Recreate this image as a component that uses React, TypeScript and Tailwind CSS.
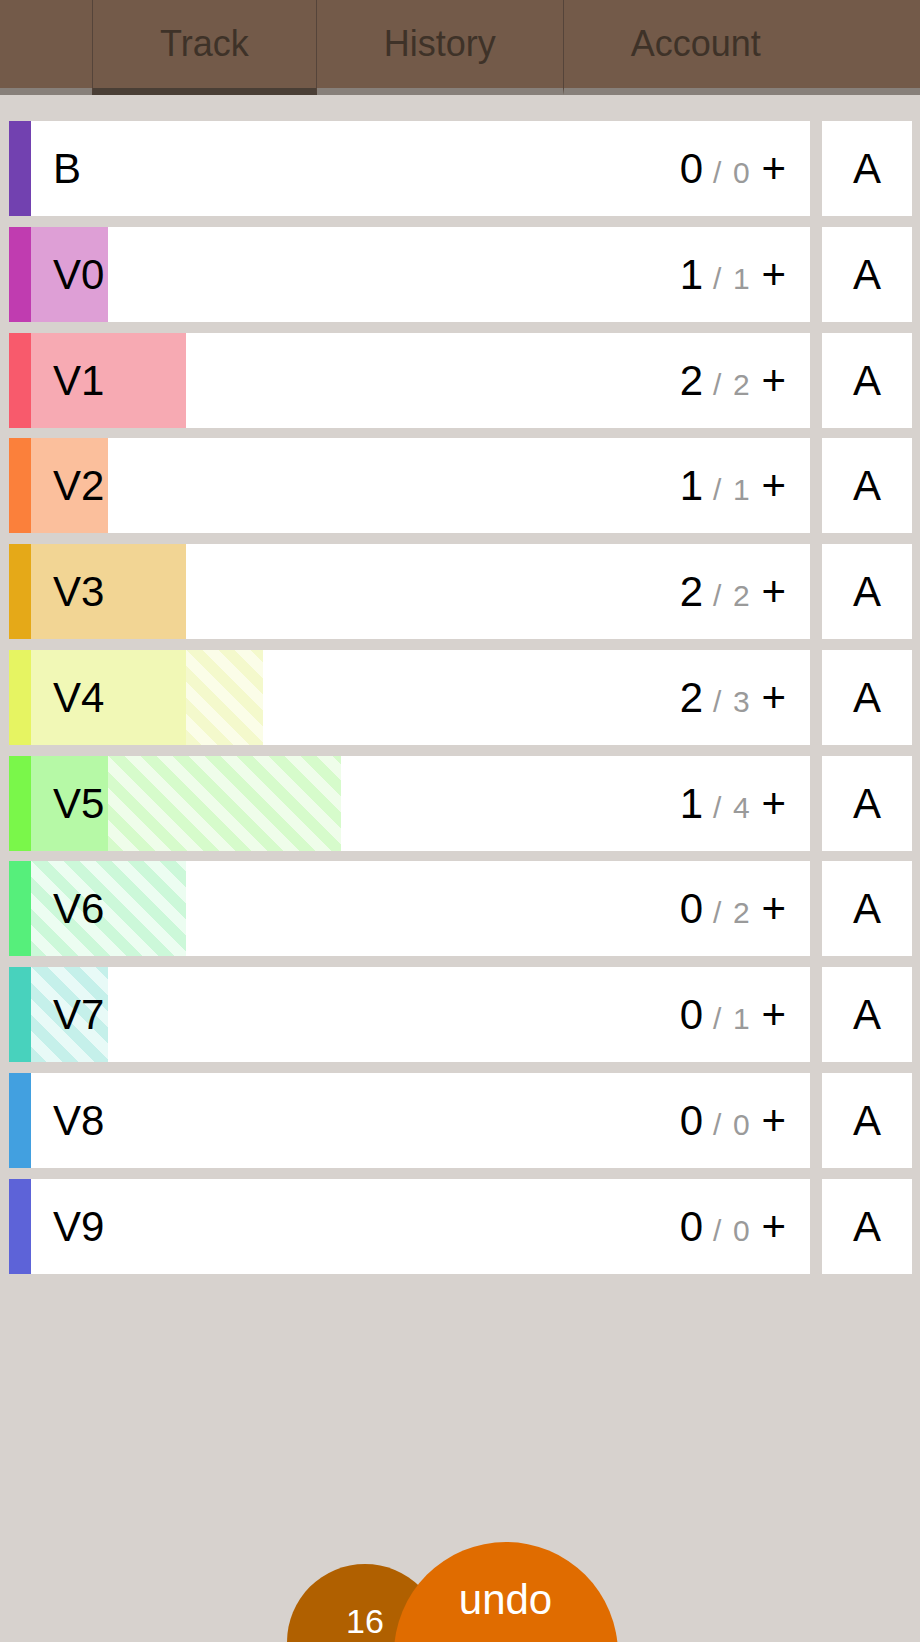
const UNIT = 77.4;

type Grade = {
  name: string;
  done: number;
  total: number;
  bar: string;
  fill: string;
  stripe: string;
};

const grades: Grade[] = [
  { name: "B", done: 0, total: 0, bar: "bg-[#7241b0]", fill: "", stripe: "" },
  { name: "V0", done: 1, total: 1, bar: "bg-[#c03cb0]", fill: "bg-[#de9fd6]", stripe: "" },
  { name: "V1", done: 2, total: 2, bar: "bg-[#f85a6c]", fill: "bg-[#f7aab3]", stripe: "" },
  { name: "V2", done: 1, total: 1, bar: "bg-[#fb803b]", fill: "bg-[#fbbf9c]", stripe: "" },
  { name: "V3", done: 2, total: 2, bar: "bg-[#e5a918]", fill: "bg-[#f2d594]", stripe: "" },
  {
    name: "V4",
    done: 2,
    total: 3,
    bar: "bg-[#e6f462]",
    fill: "bg-[#f1f8b6]",
    stripe: "bg-[repeating-linear-gradient(45deg,#f4f9cc_0_11.3px,#fbfde8_11.3px_22.6px)]",
  },
  {
    name: "V5",
    done: 1,
    total: 4,
    bar: "bg-[#7af74a]",
    fill: "bg-[#b6f9a6]",
    stripe: "bg-[repeating-linear-gradient(45deg,#d6fbcb_0_11.3px,#effdea_11.3px_22.6px)]",
  },
  {
    name: "V6",
    done: 0,
    total: 2,
    bar: "bg-[#56ef7b]",
    fill: "",
    stripe: "bg-[repeating-linear-gradient(45deg,#ccf8d9_0_11.3px,#ecfdf1_11.3px_22.6px)]",
  },
  {
    name: "V7",
    done: 0,
    total: 1,
    bar: "bg-[#48d2bd]",
    fill: "",
    stripe: "bg-[repeating-linear-gradient(45deg,#c5f0ea_0_11.3px,#e8faf7_11.3px_22.6px)]",
  },
  { name: "V8", done: 0, total: 0, bar: "bg-[#42a0e0]", fill: "", stripe: "" },
  { name: "V9", done: 0, total: 0, bar: "bg-[#5d63d8]", fill: "", stripe: "" },
];

const tabs = [
  { label: "Track", active: true, cls: "border-l border-r" },
  { label: "History", active: false, cls: "border-r" },
  { label: "Account", active: false, cls: "" },
];

function GradeRow({ g }: { g: Grade }) {
  return (
    <div className="flex h-[95px] gap-[12px]">
      <div className="flex flex-1 bg-white">
        <div className={`w-[22px] shrink-0 ${g.bar}`}></div>
        <div className="relative flex flex-1 items-center">
          {g.done > 0 && (
            <div className={`absolute inset-y-0 left-0 ${g.fill}`} style={{ width: g.done * UNIT }}></div>
          )}
          {g.total > g.done && (
            <div
              className={`absolute inset-y-0 ${g.stripe}`}
              style={{ left: g.done * UNIT, width: (g.total - g.done) * UNIT }}
            ></div>
          )}
          <span className="relative pl-[22px] text-[42px] text-black">{g.name}</span>
          <span className="relative ml-auto whitespace-pre pr-[24px] text-[42px] text-black">
            {g.done}
            <span className="ml-[10px] text-[30px] text-[#9a9a9a]">/</span>{" "}
            <span className="text-[30px] text-[#9a9a9a]">{g.total}</span> +
          </span>
        </div>
      </div>
      <div className="flex w-[90px] items-center justify-center bg-white text-[42px] text-black">A</div>
    </div>
  );
}

export default function App() {
  return (
    <div className="relative h-screen overflow-hidden bg-[#d7d2ce] font-['Liberation_Sans',Arial,sans-serif]">
      <div className="flex h-[95px] justify-center bg-[#735a49] shadow-[inset_0_-7px_0_#87807a]">
        {tabs.map((t) => (
          <div
            key={t.label}
            className={`flex h-full items-center border-b-[7px] border-[#55443a] px-[67px] text-[36px] text-[#3e3228] ${t.cls} ${
              t.active ? "border-b-[#4a3f36]" : "border-b-transparent"
            }`}
          >
            {t.label}
          </div>
        ))}
      </div>

      <div className="flex flex-col gap-[10.75px] pt-[26px] pl-[9px] pr-[8px]">
        {grades.map((g) => (
          <GradeRow key={g.name} g={g} />
        ))}
      </div>

      <button className="absolute left-[287px] top-[1564px] flex h-[156px] w-[156px] justify-center rounded-full bg-[#b06000] pt-[38px] text-[34px] leading-[1.15] text-white">
        16
      </button>
      <button className="absolute left-[393.5px] top-[1542px] flex h-[224px] w-[224px] justify-center rounded-full bg-[#e06c00] pt-[34px] text-[42px] leading-[1.15] text-white">
        undo
      </button>
    </div>
  );
}
